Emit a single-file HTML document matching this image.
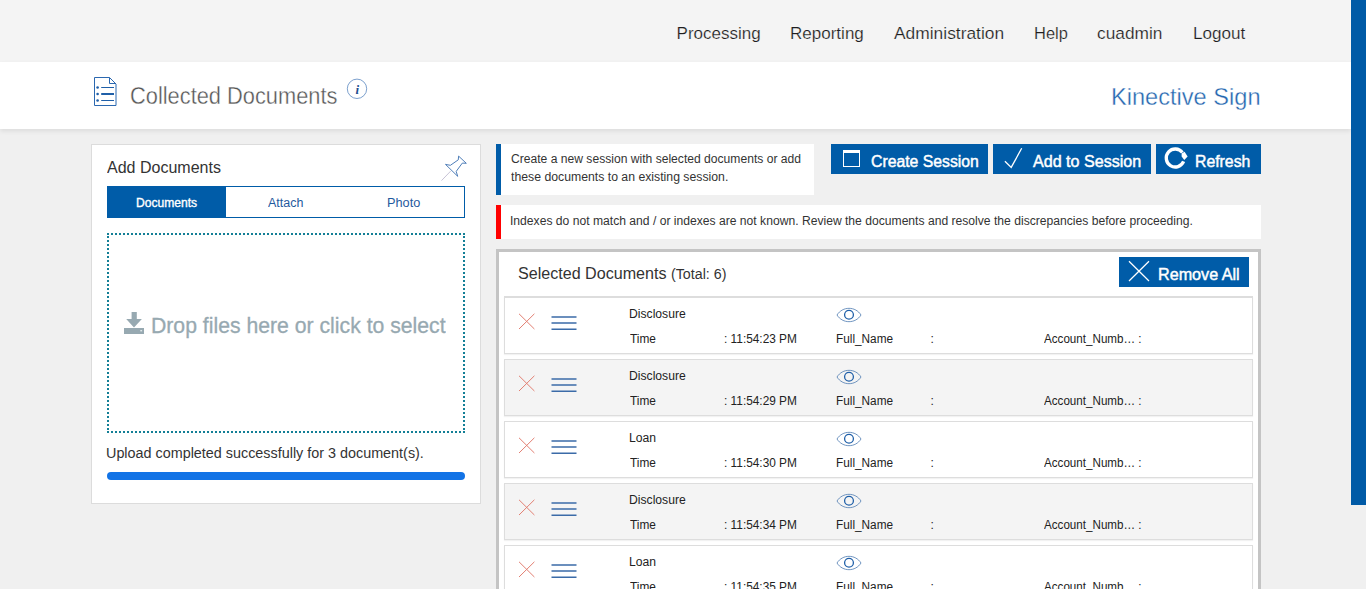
<!DOCTYPE html>
<html><head><meta charset="utf-8">
<style>
*{margin:0;padding:0;box-sizing:border-box;}
html,body{width:1366px;height:589px;overflow:hidden;}
body{background:#f0f0f0;font-family:"Liberation Sans",sans-serif;color:#222;position:relative;}
.abs{position:absolute;}
.tx{position:absolute;white-space:nowrap;transform-origin:0 0;}
#nav{position:absolute;left:0;top:0;width:1366px;height:62px;background:#f4f4f4;}
#hdr{position:absolute;left:0;top:62px;width:1351px;height:67px;background:#fff;box-shadow:0 2px 5px rgba(0,0,0,0.09);}
#bar{position:absolute;left:1351px;top:0;width:15px;height:505px;background:#005aa6;}
.btn{position:absolute;background:#005ca8;}
.row{position:absolute;left:504px;width:749px;height:57px;border:1px solid #dddddd;box-shadow:0 1px 1px rgba(0,0,0,0.05);}
.row.g{background:#f4f4f4;}
.row.w{background:#fff;}
</style></head><body>
<div id="nav"></div>
<div id="hdr"></div>
<div id="bar"></div>
<svg class="abs" style="left:93px;top:76px" width="25" height="31" viewBox="0 0 25 31">
<path d="M1.5 1.5 H16.5 L23 8 V29.5 H1.5 Z" fill="none" stroke="#2b68b0" stroke-width="1"/>
<path d="M16.5 1.5 V7.5 H23" fill="none" stroke="#2b68b0" stroke-width="1"/>
<circle cx="4.6" cy="11.5" r="1.3" fill="#1f5fa8"/><circle cx="4.6" cy="18" r="1.3" fill="#1f5fa8"/><circle cx="4.6" cy="24.5" r="1.3" fill="#1f5fa8"/>
<path d="M8.2 11.5 H21 M8.2 24.5 H21" stroke="#1f5fa8" stroke-width="1.2"/><path d="M8.2 18 H21" stroke="#1f5fa8" stroke-width="2"/></svg>
<svg class="abs" style="left:346px;top:78px" width="22" height="22" viewBox="0 0 22 22">
<circle cx="11" cy="10.8" r="9.7" fill="none" stroke="#5b88c0" stroke-width="0.8"/>
<text x="11.3" y="15.5" text-anchor="middle" font-family="Liberation Serif" font-style="italic" font-weight="bold" font-size="13" fill="#1f4f8f">i</text></svg>
<div class="abs" style="left:91px;top:144px;width:390px;height:360px;background:#fff;border:1px solid #dcdcdc;"></div>
<svg class="abs" style="left:436px;top:150px" width="36" height="36" viewBox="0 0 36 36">
<path d="M9.5 14.4 L14.4 15.3 L22.3 9.8 L22.6 6.1 L30.3 13.3 L26.3 13.1 L20.2 21.4 L21.7 26.3 Z" fill="none" stroke="#3b6fb0" stroke-width="0.9" stroke-linejoin="miter"/>
<path d="M14.7 21.1 L5.5 30.6" stroke="#b9b4cc" stroke-width="0.8"/></svg>
<div class="abs" style="left:107px;top:186px;width:358px;height:32px;border:1px solid #005ca8;background:#fff;"></div>
<div class="abs" style="left:107px;top:186px;width:119px;height:32px;background:#005ca8;"></div>
<div class="abs" style="left:107px;top:233px;width:358px;height:200px;border:2px dotted #137f96;"></div>
<svg class="abs" style="left:124px;top:312px" width="21" height="22" viewBox="0 0 21 22">
<path d="M7.6 0 H12.8 V7 H17.9 L10 15.6 L2.2 7 H7.6 Z" fill="#97a9b1"/>
<rect x="0" y="16" width="20" height="6" fill="#97a9b1"/><rect x="16.3" y="18" width="1.8" height="1.4" fill="#dfe8ea"/></svg>
<div class="abs" style="left:107px;top:472px;width:358px;height:8px;border-radius:4px;background:#1273e6;"></div>

<div class="abs" style="left:496px;top:144px;width:318px;height:51px;background:#fff;border-left:5px solid #005ca8;"></div>
<div class="abs" style="left:496px;top:205px;width:765px;height:34px;background:#fff;border-left:5px solid #ff0000;"></div>

<div class="btn" style="left:831px;top:144px;width:157px;height:30px;"></div>
<div class="abs" style="left:843px;top:150px;width:17px;height:17px;border:1px solid #fff;border-top-width:3px;"></div>
<div class="btn" style="left:993px;top:144px;width:158px;height:30px;"></div>
<svg class="abs" style="left:1004px;top:147px" width="20" height="22" viewBox="0 0 20 22"><path d="M0.9 14.3 L7.2 20.4 L17.7 1.3" fill="none" stroke="#fff" stroke-width="1.3"/></svg>
<div class="btn" style="left:1156px;top:144px;width:105px;height:30px;"></div>
<svg class="abs" style="left:1158px;top:143px" width="32" height="30" viewBox="0 0 32 30">
<path d="M25.6 18.4 A9 9 0 1 1 24.4 9.5" fill="none" stroke="#fff" stroke-width="3.3"/>
<path d="M23.6 10.6 L26.6 8.8 L29.6 13.4 L26.3 17.0 L23.6 13.4 Z" fill="#fff"/></svg>

<div class="abs" style="left:496px;top:249px;width:765px;height:345px;background:#fff;border:3px solid #c4c4c4;border-bottom:none;"></div>
<div class="btn" style="left:1119px;top:257px;width:130px;height:30px;"></div>
<svg class="abs" style="left:1128px;top:260px" width="22" height="22" viewBox="0 0 22 22"><path d="M1 1.2 L21 21 M21 1.2 L1 21" stroke="#fff" stroke-width="1.25"/></svg>

<div class="row w" style="top:296px;height:58px;border-top-width:2px"></div>
<svg class="abs" style="left:518px;top:313px" width="18" height="18" viewBox="0 0 18 18"><path d="M1 0.8 L16.4 16 M16.4 0.8 L1 16" stroke="#e27f72" stroke-width="1"/></svg>
<svg class="abs" style="left:551px;top:315px" width="26" height="15" viewBox="0 0 26 15"><path d="M0.5 1.9 H25.5 M0.5 8 H25.5 M0.5 14.3 H25.5" stroke="#3b6ba8" stroke-width="1.5"/></svg>
<svg class="abs" style="left:836px;top:307px" width="26" height="16" viewBox="0 0 26 16" overflow="visible"><path d="M1 8 C6.5 -0.9 19.5 -0.9 25 8 C19.5 16.9 6.5 16.9 1 8 Z" fill="none" stroke="#4a78b0" stroke-width="0.8"/><circle cx="13" cy="7.8" r="4.4" fill="none" stroke="#1f5fa8" stroke-width="1.3"/></svg>
<div class="tx" style="left:628.6px;top:308px;font-size:12px;line-height:12px;color:#222;font-weight:normal;transform:scaleX(1.0127);">Disclosure</div>
<div class="tx" style="left:629.6px;top:333px;font-size:12px;line-height:12px;color:#222;font-weight:normal;transform:scaleX(0.9885);">Time</div>
<div class="tx" style="left:723.5px;top:333px;font-size:12px;line-height:12px;color:#222;font-weight:normal;transform:scaleX(0.9875);">: 11:54:23 PM</div>
<div class="tx" style="left:835.9px;top:333px;font-size:12px;line-height:12px;color:#222;font-weight:normal;transform:scaleX(0.9825);">Full_Name</div>
<div class="tx" style="left:930.4px;top:333px;font-size:12px;line-height:12px;color:#222;font-weight:normal;transform:scaleX(1.0);">:</div>
<div class="tx" style="left:1044.1px;top:333px;font-size:12px;line-height:12px;color:#222;font-weight:normal;transform:scaleX(0.969);">Account_Numb… :</div>
<div class="row g" style="top:359px"></div>
<svg class="abs" style="left:518px;top:375px" width="18" height="18" viewBox="0 0 18 18"><path d="M1 0.8 L16.4 16 M16.4 0.8 L1 16" stroke="#e27f72" stroke-width="1"/></svg>
<svg class="abs" style="left:551px;top:377px" width="26" height="15" viewBox="0 0 26 15"><path d="M0.5 1.9 H25.5 M0.5 8 H25.5 M0.5 14.3 H25.5" stroke="#3b6ba8" stroke-width="1.5"/></svg>
<svg class="abs" style="left:836px;top:369px" width="26" height="16" viewBox="0 0 26 16" overflow="visible"><path d="M1 8 C6.5 -0.9 19.5 -0.9 25 8 C19.5 16.9 6.5 16.9 1 8 Z" fill="none" stroke="#4a78b0" stroke-width="0.8"/><circle cx="13" cy="7.8" r="4.4" fill="none" stroke="#1f5fa8" stroke-width="1.3"/></svg>
<div class="tx" style="left:628.6px;top:370px;font-size:12px;line-height:12px;color:#222;font-weight:normal;transform:scaleX(1.0127);">Disclosure</div>
<div class="tx" style="left:629.6px;top:395px;font-size:12px;line-height:12px;color:#222;font-weight:normal;transform:scaleX(0.9885);">Time</div>
<div class="tx" style="left:723.5px;top:395px;font-size:12px;line-height:12px;color:#222;font-weight:normal;transform:scaleX(0.9875);">: 11:54:29 PM</div>
<div class="tx" style="left:835.9px;top:395px;font-size:12px;line-height:12px;color:#222;font-weight:normal;transform:scaleX(0.9825);">Full_Name</div>
<div class="tx" style="left:930.4px;top:395px;font-size:12px;line-height:12px;color:#222;font-weight:normal;transform:scaleX(1.0);">:</div>
<div class="tx" style="left:1044.1px;top:395px;font-size:12px;line-height:12px;color:#222;font-weight:normal;transform:scaleX(0.969);">Account_Numb… :</div>
<div class="row w" style="top:421px"></div>
<svg class="abs" style="left:518px;top:437px" width="18" height="18" viewBox="0 0 18 18"><path d="M1 0.8 L16.4 16 M16.4 0.8 L1 16" stroke="#e27f72" stroke-width="1"/></svg>
<svg class="abs" style="left:551px;top:439px" width="26" height="15" viewBox="0 0 26 15"><path d="M0.5 1.9 H25.5 M0.5 8 H25.5 M0.5 14.3 H25.5" stroke="#3b6ba8" stroke-width="1.5"/></svg>
<svg class="abs" style="left:836px;top:431px" width="26" height="16" viewBox="0 0 26 16" overflow="visible"><path d="M1 8 C6.5 -0.9 19.5 -0.9 25 8 C19.5 16.9 6.5 16.9 1 8 Z" fill="none" stroke="#4a78b0" stroke-width="0.8"/><circle cx="13" cy="7.8" r="4.4" fill="none" stroke="#1f5fa8" stroke-width="1.3"/></svg>
<div class="tx" style="left:628.6px;top:432px;font-size:12px;line-height:12px;color:#222;font-weight:normal;transform:scaleX(1.0127);">Loan</div>
<div class="tx" style="left:629.6px;top:457px;font-size:12px;line-height:12px;color:#222;font-weight:normal;transform:scaleX(0.9885);">Time</div>
<div class="tx" style="left:723.5px;top:457px;font-size:12px;line-height:12px;color:#222;font-weight:normal;transform:scaleX(0.9875);">: 11:54:30 PM</div>
<div class="tx" style="left:835.9px;top:457px;font-size:12px;line-height:12px;color:#222;font-weight:normal;transform:scaleX(0.9825);">Full_Name</div>
<div class="tx" style="left:930.4px;top:457px;font-size:12px;line-height:12px;color:#222;font-weight:normal;transform:scaleX(1.0);">:</div>
<div class="tx" style="left:1044.1px;top:457px;font-size:12px;line-height:12px;color:#222;font-weight:normal;transform:scaleX(0.969);">Account_Numb… :</div>
<div class="row g" style="top:483px"></div>
<svg class="abs" style="left:518px;top:499px" width="18" height="18" viewBox="0 0 18 18"><path d="M1 0.8 L16.4 16 M16.4 0.8 L1 16" stroke="#e27f72" stroke-width="1"/></svg>
<svg class="abs" style="left:551px;top:501px" width="26" height="15" viewBox="0 0 26 15"><path d="M0.5 1.9 H25.5 M0.5 8 H25.5 M0.5 14.3 H25.5" stroke="#3b6ba8" stroke-width="1.5"/></svg>
<svg class="abs" style="left:836px;top:493px" width="26" height="16" viewBox="0 0 26 16" overflow="visible"><path d="M1 8 C6.5 -0.9 19.5 -0.9 25 8 C19.5 16.9 6.5 16.9 1 8 Z" fill="none" stroke="#4a78b0" stroke-width="0.8"/><circle cx="13" cy="7.8" r="4.4" fill="none" stroke="#1f5fa8" stroke-width="1.3"/></svg>
<div class="tx" style="left:628.6px;top:494px;font-size:12px;line-height:12px;color:#222;font-weight:normal;transform:scaleX(1.0127);">Disclosure</div>
<div class="tx" style="left:629.6px;top:519px;font-size:12px;line-height:12px;color:#222;font-weight:normal;transform:scaleX(0.9885);">Time</div>
<div class="tx" style="left:723.5px;top:519px;font-size:12px;line-height:12px;color:#222;font-weight:normal;transform:scaleX(0.9875);">: 11:54:34 PM</div>
<div class="tx" style="left:835.9px;top:519px;font-size:12px;line-height:12px;color:#222;font-weight:normal;transform:scaleX(0.9825);">Full_Name</div>
<div class="tx" style="left:930.4px;top:519px;font-size:12px;line-height:12px;color:#222;font-weight:normal;transform:scaleX(1.0);">:</div>
<div class="tx" style="left:1044.1px;top:519px;font-size:12px;line-height:12px;color:#222;font-weight:normal;transform:scaleX(0.969);">Account_Numb… :</div>
<div class="row w" style="top:545px"></div>
<svg class="abs" style="left:518px;top:561px" width="18" height="18" viewBox="0 0 18 18"><path d="M1 0.8 L16.4 16 M16.4 0.8 L1 16" stroke="#e27f72" stroke-width="1"/></svg>
<svg class="abs" style="left:551px;top:563px" width="26" height="15" viewBox="0 0 26 15"><path d="M0.5 1.9 H25.5 M0.5 8 H25.5 M0.5 14.3 H25.5" stroke="#3b6ba8" stroke-width="1.5"/></svg>
<svg class="abs" style="left:836px;top:555px" width="26" height="16" viewBox="0 0 26 16" overflow="visible"><path d="M1 8 C6.5 -0.9 19.5 -0.9 25 8 C19.5 16.9 6.5 16.9 1 8 Z" fill="none" stroke="#4a78b0" stroke-width="0.8"/><circle cx="13" cy="7.8" r="4.4" fill="none" stroke="#1f5fa8" stroke-width="1.3"/></svg>
<div class="tx" style="left:628.6px;top:556px;font-size:12px;line-height:12px;color:#222;font-weight:normal;transform:scaleX(1.0127);">Loan</div>
<div class="tx" style="left:629.6px;top:581px;font-size:12px;line-height:12px;color:#222;font-weight:normal;transform:scaleX(0.9885);">Time</div>
<div class="tx" style="left:723.5px;top:581px;font-size:12px;line-height:12px;color:#222;font-weight:normal;transform:scaleX(0.9875);">: 11:54:35 PM</div>
<div class="tx" style="left:835.9px;top:581px;font-size:12px;line-height:12px;color:#222;font-weight:normal;transform:scaleX(0.9825);">Full_Name</div>
<div class="tx" style="left:930.4px;top:581px;font-size:12px;line-height:12px;color:#222;font-weight:normal;transform:scaleX(1.0);">:</div>
<div class="tx" style="left:1044.1px;top:581px;font-size:12px;line-height:12px;color:#222;font-weight:normal;transform:scaleX(0.969);">Account_Numb… :</div>
<div class="tx" style="left:676.6px;top:25px;font-size:17px;line-height:17px;color:#1e1e1e;font-weight:normal;transform:scaleX(1.0);-webkit-text-stroke:0.2px #f4f4f4;">Processing</div>
<div class="tx" style="left:790.2px;top:25px;font-size:17px;line-height:17px;color:#1e1e1e;font-weight:normal;transform:scaleX(1.0014);-webkit-text-stroke:0.2px #f4f4f4;">Reporting</div>
<div class="tx" style="left:893.9px;top:25px;font-size:17px;line-height:17px;color:#1e1e1e;font-weight:normal;transform:scaleX(1.0224);-webkit-text-stroke:0.2px #f4f4f4;">Administration</div>
<div class="tx" style="left:1033.5px;top:25px;font-size:17px;line-height:17px;color:#1e1e1e;font-weight:normal;transform:scaleX(0.9676);-webkit-text-stroke:0.2px #f4f4f4;">Help</div>
<div class="tx" style="left:1097.3px;top:25px;font-size:17px;line-height:17px;color:#1e1e1e;font-weight:normal;transform:scaleX(1.0175);-webkit-text-stroke:0.2px #f4f4f4;">cuadmin</div>
<div class="tx" style="left:1192.9px;top:25px;font-size:17px;line-height:17px;color:#1e1e1e;font-weight:normal;transform:scaleX(1.0059);-webkit-text-stroke:0.2px #f4f4f4;">Logout</div>
<div class="tx" style="left:129.5px;top:85px;font-size:23px;line-height:23px;color:#555555;font-weight:normal;transform:scaleX(0.9488);-webkit-text-stroke:0.35px #fff;">Collected Documents</div>
<div class="tx" style="left:1111.2px;top:85px;font-size:24px;line-height:24px;color:#2567b0;font-weight:normal;transform:scaleX(0.9832);-webkit-text-stroke:0.35px #fff;">Kinective Sign</div>
<div class="tx" style="left:107.0px;top:160px;font-size:16px;line-height:16px;color:#333;font-weight:normal;transform:scaleX(1.0009);">Add Documents</div>
<div class="tx" style="left:136.3px;top:197px;font-size:12px;line-height:12px;color:#fff;font-weight:normal;transform:scaleX(1.0066);-webkit-text-stroke-width:0.35px;">Documents</div>
<div class="tx" style="left:267.7px;top:197px;font-size:12px;line-height:12px;color:#1f5a9e;font-weight:normal;transform:scaleX(1.0412);">Attach</div>
<div class="tx" style="left:387.4px;top:197px;font-size:12px;line-height:12px;color:#1f5a9e;font-weight:normal;transform:scaleX(1.06);">Photo</div>
<div class="tx" style="left:151.2px;top:316px;font-size:21.5px;line-height:21.5px;color:#97a9b1;font-weight:normal;transform:scaleX(0.9862);-webkit-text-stroke-width:0.3px;">Drop files here or click to select</div>
<div class="tx" style="left:106.0px;top:446px;font-size:14px;line-height:14px;color:#333;font-weight:normal;transform:scaleX(1.0263);">Upload completed successfully for 3 document(s).</div>
<div class="tx" style="left:510.7px;top:153px;font-size:12px;line-height:12px;color:#333;font-weight:normal;transform:scaleX(1.0087);">Create a new session with selected documents or add</div>
<div class="tx" style="left:510.7px;top:171px;font-size:12px;line-height:12px;color:#333;font-weight:normal;transform:scaleX(1.0212);">these documents to an existing session.</div>
<div class="tx" style="left:509.7px;top:215px;font-size:12px;line-height:12px;color:#333;font-weight:normal;transform:scaleX(1.0105);">Indexes do not match and / or indexes are not known. Review the documents and resolve the discrepancies before proceeding.</div>
<div class="tx" style="left:870.5px;top:154px;font-size:16px;line-height:16px;color:#fff;font-weight:normal;transform:scaleX(0.9862);-webkit-text-stroke-width:0.45px;">Create Session</div>
<div class="tx" style="left:1032.7px;top:154px;font-size:16px;line-height:16px;color:#fff;font-weight:normal;transform:scaleX(1.0056);-webkit-text-stroke-width:0.45px;">Add to Session</div>
<div class="tx" style="left:1194.9px;top:154px;font-size:16px;line-height:16px;color:#fff;font-weight:normal;transform:scaleX(0.9873);-webkit-text-stroke-width:0.45px;">Refresh</div>
<div class="tx" style="left:518.1px;top:266px;font-size:16px;line-height:16px;color:#333;font-weight:normal;transform:scaleX(1.0061);">Selected Documents</div>
<div class="tx" style="left:671.3px;top:267px;font-size:14px;line-height:14px;color:#333;font-weight:normal;transform:scaleX(1.017);">(Total: 6)</div>
<div class="tx" style="left:1157.6px;top:267px;font-size:16px;line-height:16px;color:#fff;font-weight:normal;transform:scaleX(1.0089);-webkit-text-stroke-width:0.45px;">Remove All</div>
</body></html>
